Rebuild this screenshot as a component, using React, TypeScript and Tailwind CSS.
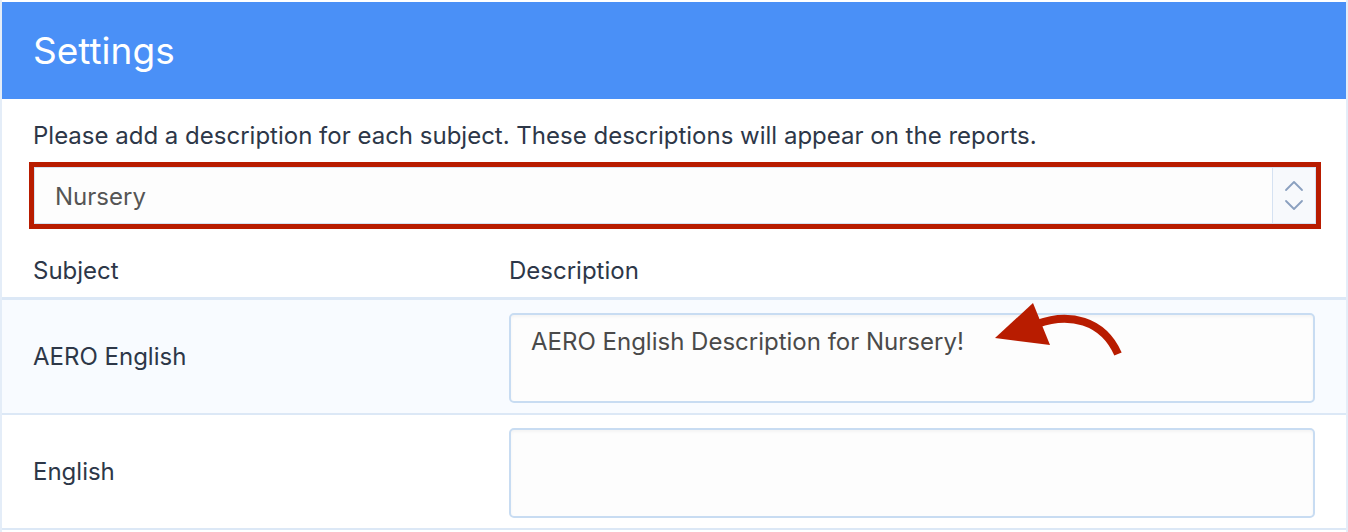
const rows = [
  { subject: "AERO English", description: "AERO English Description for Nursery!", shaded: true },
  { subject: "English", description: "", shaded: false },
];

function CurvedArrow() {
  return (
    <svg className="absolute left-[985px] top-[298px]" width="140" height="64" viewBox="0 0 140 64">
      <path d="M50 26 C 82 14, 116 22, 131 56" fill="none" stroke="#b81c00" strokeWidth="8" />
      <polygon points="8,40 46,5 63,47" fill="#b81c00" />
    </svg>
  );
}

function Stepper() {
  return (
    <svg width="20" height="32" viewBox="0 0 20 32" fill="none" stroke="#8aa0bf" strokeWidth="1.8" strokeLinecap="round" strokeLinejoin="round">
      <polyline points="2,10 10,2 18,10" />
      <polyline points="2,21 10,29 18,21" />
    </svg>
  );
}

export default function App() {
  return (
    <div className="relative h-[532px] w-[1348px] overflow-hidden bg-white pt-[2px] border-x-2 border-[#e4edf8] font-['Inter','Liberation_Sans',sans-serif] text-[#2d3748]">
      {/* Header */}
      <div className="flex h-[97px] items-center bg-[#4a90f7] px-[31px]">
        <h1 className="text-[37px] font-normal text-white">Settings</h1>
      </div>

      <div className="px-[31px]">
        <p className="pt-[21px] text-[24px] leading-[32px]">
          Please add a description for each subject. These descriptions will appear on the reports.
        </p>

        {/* Grade select with red highlight */}
        <div className="mt-[10px] -ml-[4px] w-[1292px] border-[5px] border-[#b81c00]">
          <div className="flex h-[57px] items-center border border-[#d5e2f2] bg-[#fdfdfd]">
            <span className="flex-1 pl-[20px] pt-[2px] text-[24px] text-[#555]">Nursery</span>
            <div className="flex h-full w-[43px] items-center justify-center border-l border-[#d5e2f2] bg-[#f7f9fc]">
              <Stepper />
            </div>
          </div>
        </div>
      </div>

      {/* Table */}
      <div className="mt-[24px] flex h-[47px] items-start border-b-[3px] border-[#dce8f6] text-[24px] leading-[36px]">
        <div className="w-[507px] pl-[31px]">Subject</div>
        <div>Description</div>
      </div>
      {rows.map((row) => (
        <div
          key={row.subject}
          className={`flex h-[115px] items-center border-b-2 border-[#dce8f6] ${row.shaded ? "bg-[#f8fbff]" : "bg-white"}`}
        >
          <div className="w-[507px] pl-[31px] text-[24px]">{row.subject}</div>
          <div className="mt-[13px] h-[90px] w-[806px] self-start rounded-[5px] border-2 border-[#c8dcf2] bg-[#fdfdfd] px-[20px] pt-[9px] text-[24px] leading-[36px] text-[#4a4a4a] shadow-[inset_0_2px_3px_rgba(0,0,0,0.04)]">
            {row.description}
          </div>
        </div>
      ))}

      <CurvedArrow />
    </div>
  );
}
